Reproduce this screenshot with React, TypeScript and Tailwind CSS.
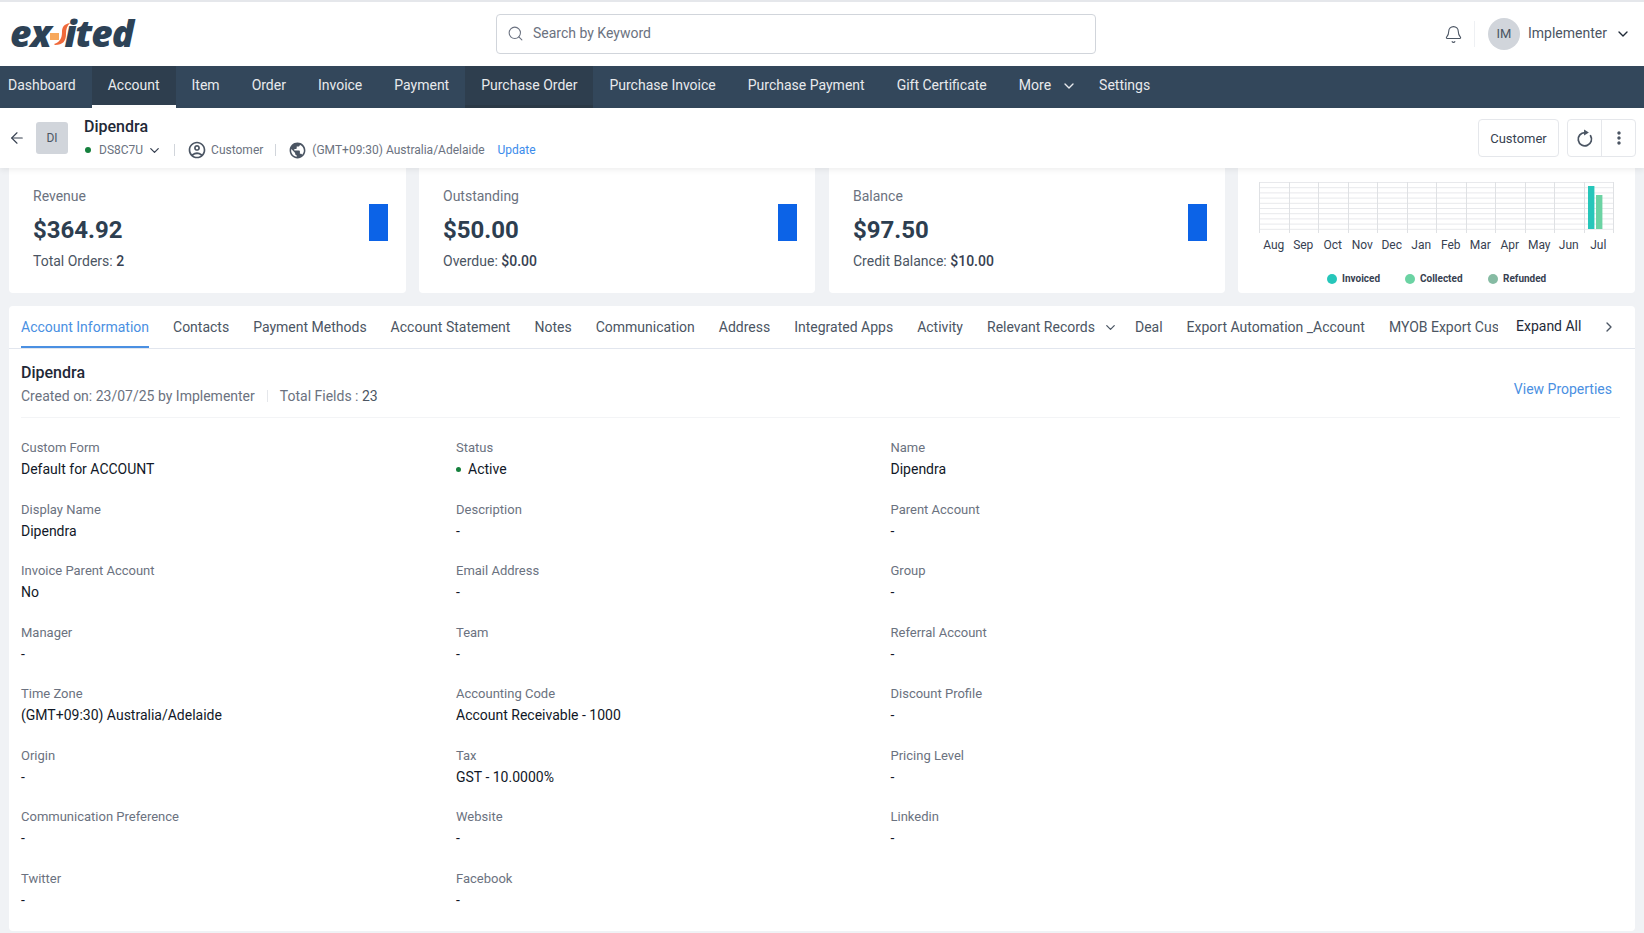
import React from "react";
import { ArrowLeft, Bell, ChevronDown, ChevronRight, Search } from "lucide-react";
import { MdMoreVert, MdOutlineAccountCircle, MdPublic } from "react-icons/md";

const nav: { label: string; cls: string; dark?: boolean; active?: boolean }[] = [
  { label: "Dashboard", cls: "pl-2 pr-4" },
  { label: "Account", cls: "px-4", dark: true, active: true },
  { label: "Item", cls: "px-4" },
  { label: "Order", cls: "px-4" },
  { label: "Invoice", cls: "px-4" },
  { label: "Payment", cls: "px-4" },
  { label: "Purchase Order", cls: "px-4", dark: true },
  { label: "Purchase Invoice", cls: "px-4" },
  { label: "Purchase Payment", cls: "px-4" },
  { label: "Gift Certificate", cls: "px-4" },
];

const tabs = [
  "Contacts",
  "Payment Methods",
  "Account Statement",
  "Notes",
  "Communication",
  "Address",
  "Integrated Apps",
  "Activity",
];

const cards = [
  { t: "Revenue", v: "$364.92", k: "Total Orders:", n: "2", c: "" },
  { t: "Outstanding", v: "$50.00", k: "Overdue:", n: "$0.00", c: "" },
  { t: "Balance", v: "$97.50", k: "Credit Balance:", n: "$10.00", c: "ml-[1px]" },
];

const fields: [string, string][] = [
  ["Custom Form", "Default for ACCOUNT"],
  ["Status", "Active"],
  ["Name", "Dipendra"],
  ["Display Name", "Dipendra"],
  ["Description", "-"],
  ["Parent Account", "-"],
  ["Invoice Parent Account", "No"],
  ["Email Address", "-"],
  ["Group", "-"],
  ["Manager", "-"],
  ["Team", "-"],
  ["Referral Account", "-"],
  ["Time Zone", "(GMT+09:30) Australia/Adelaide"],
  ["Accounting Code", "Account Receivable - 1000"],
  ["Discount Profile", "-"],
  ["Origin", "-"],
  ["Tax", "GST - 10.0000%"],
  ["Pricing Level", "-"],
  ["Communication Preference", "-"],
  ["Website", "-"],
  ["Linkedin", "-"],
  ["Twitter", "-"],
  ["Facebook", "-"],
];

const months = ["Aug", "Sep", "Oct", "Nov", "Dec", "Jan", "Feb", "Mar", "Apr", "May", "Jun", "Jul"];
const vLines = [0, 30, 59, 89, 118, 148, 177, 207, 236, 266, 295, 325, 354];
const hLines = [0, 5.2, 10.4, 15.6, 20.8, 26, 31.2, 36.4, 41.6, 46.8];

function Chart() {
  return (
    <div className="bg-white rounded-b-[4px] pl-[21px] pt-[14px]">
      <svg width="356" height="52" viewBox="0 0 356 52" className="block">
        {hLines.map((y) => (
          <line key={y} x1="0.5" x2="354.5" y1={y + 0.5} y2={y + 0.5} stroke="#e8e9ec" strokeWidth="1" />
        ))}
        {vLines.map((x) => (
          <line key={x} x1={x + 0.5} x2={x + 0.5} y1="0" y2="51" stroke="#dfe1e4" strokeWidth="1" />
        ))}
        <rect x="329" y="4" width="6.4" height="43" fill="#26c6ba" />
        <rect x="337" y="13" width="6.4" height="34" fill="#6bd3a3" />
      </svg>
      <div className="flex w-[354px] mt-[1px] text-[12px] leading-[20px] text-[#374151]">
        {months.map((m) => (
          <div key={m} className="flex-1 text-center">
            {m}
          </div>
        ))}
      </div>
      <div className="flex items-center mt-[14px] ml-[68px] text-[10px] leading-[20px] font-bold text-[#374151]">
        <span className="w-[10px] h-[10px] rounded-full bg-[#26c6ba] mr-[5px]" />
        <span className="w-[63px]">Invoiced</span>
        <span className="w-[10px] h-[10px] rounded-full bg-[#6bd3a3] mr-[5px]" />
        <span className="w-[68px]">Collected</span>
        <span className="w-[10px] h-[10px] rounded-full bg-[#86bba3] mr-[5px]" />
        <span>Refunded</span>
      </div>
    </div>
  );
}

function Logo() {
  return (
    <div className="flex items-center pl-[10px] pb-[3px] w-[496px] h-full text-[#2d4256] italic font-extrabold text-[37px] tracking-[-1px] leading-none font-['Open_Sans',sans-serif]">
      <span>ex</span>
      <svg width="24" height="30" viewBox="0 0 24 30" className="-ml-[1px] -mr-[9px] shrink-0">
        <rect x="1" y="15" width="9" height="7" fill="#f7a95c" />
        <path d="M21 5 C15 6 13 9 13 14 C13 20 11 24 5 26 L6 27 C14 27 17 23 17 16 C17 11 18 8 21 5 Z" fill="#f0693a" />
      </svg>
      <span>ited</span>
    </div>
  );
}

export default function App() {
  return (
    <div className="w-full h-[933px] overflow-hidden flex flex-col bg-[#f0f2f5] font-['Roboto',sans-serif] text-[14px] leading-[20px] text-[#374151]">
      <div className="h-[2px] shrink-0 bg-[#e5e7eb]" />
      <header className="h-[64px] shrink-0 bg-white flex items-center">
        <Logo />
        <div className="w-[600px] h-[40px] border border-[#d1d5db] rounded-[4px] flex items-center pl-[10px] pb-[2px]">
          <Search size={17} strokeWidth={1.5} className="text-[#6b7280]" />
          <span className="ml-[9px] text-[#6b7280]">Search by Keyword</span>
        </div>
        <Bell size={19} strokeWidth={1.4} className="text-[#4b5563] ml-[348px]" />
        <div className="w-px h-[26px] bg-[#eef0f3] ml-[11px]" />
        <div className="w-[32px] h-[32px] rounded-full bg-[#d1d5db] ml-[13px] flex items-center justify-center text-[#4b5563] text-[13px]">
          IM
        </div>
        <span className="ml-[8px] pb-[2px] text-[#4b5563]">Implementer</span>
        <ChevronDown size={16} strokeWidth={2} className="text-[#1f2937] ml-[8px]" />
      </header>

      <nav className="h-[42px] shrink-0 bg-[#33475b] flex items-stretch text-[#e8eaed]">
        {nav.map((n) => (
          <div
            key={n.label}
            className={`${n.cls} flex items-center ${n.dark ? "bg-[#2e3e4e] pb-[1px]" : "pb-[4px]"} ${
              n.active ? "border-b-[3px] border-white" : n.dark ? "border-b-[3px] border-[#2c3a47]" : ""
            }`}
          >
            {n.label}
          </div>
        ))}
        <div className="pl-4 flex items-center pb-[4px]">More</div>
        <div className="ml-[10px] flex items-center pb-[3px]">
          <ChevronDown size={16} />
        </div>
        <div className="pl-[22px] flex items-center pb-[4px]">Settings</div>
      </nav>

      <div className="h-[60px] shrink-0 bg-white flex items-center shadow-[0_2px_6px_rgba(0,0,0,0.07)] relative z-10">
        <ArrowLeft size={18} strokeWidth={1.5} className="text-[#374151] ml-[8px]" />
        <div className="w-[32px] h-[32px] rounded-[3px] bg-[#d1d5db] ml-[10px] flex items-center justify-center text-[12px] text-[#4b5563]">
          DI
        </div>
        <div className="ml-[16px] -mt-[1px]">
          <div className="text-[16px] leading-[24px] font-medium text-[#1f2937]">Dipendra</div>
          <div className="flex items-center text-[12px] leading-[16px] text-[#6b7280] mt-[1px]">
            <span className="w-[6px] h-[6px] rounded-full bg-[#15803d] ml-[1px]" />
            <span className="ml-[8px]">DS8C7U</span>
            <ChevronDown size={15} strokeWidth={2} className="ml-[4px] text-[#374151]" />
            <span className="w-px h-[12px] bg-[#d1d5db] ml-[12px]" />
            <MdOutlineAccountCircle size={20} className="ml-[12px] text-[#4b5563]" />
            <span className="ml-[4px]">Customer</span>
            <span className="w-px h-[12px] bg-[#d1d5db] ml-[12px]" />
            <MdPublic size={19} className="ml-[12px] text-[#4b5563]" />
            <span className="ml-[5px]">(GMT+09:30) Australia/Adelaide</span>
            <span className="ml-[13px] text-[#3b8beb]">Update</span>
          </div>
        </div>
        <div className="ml-auto flex items-center mr-[8px]">
          <div className="w-[81px] h-[38px] border border-[#e5e7eb] rounded-[4px] flex items-center justify-center text-[13px] text-[#374151] pt-[1px]">
            Customer
          </div>
          <div className="ml-[8px] w-[69px] h-[38px] border border-[#e5e7eb] rounded-[4px] flex items-stretch">
            <div className="flex-1 flex items-center justify-center border-r border-[#e5e7eb]">
              <svg width="21" height="21" viewBox="0 0 24 24" fill="none" className="text-[#4b5563]">
                <path d="M12.5 5.2a7.6 7.6 0 1 0 6.4 3.6" stroke="currentColor" strokeWidth="2" strokeLinecap="round" />
                <path d="M11.5 1.8 L17 5.2 L11.5 8.6 Z" fill="currentColor" />
              </svg>
            </div>
            <div className="flex-1 flex items-center justify-center">
              <MdMoreVert size={20} className="text-[#4b5563]" />
            </div>
          </div>
        </div>
      </div>

      <div className="grid grid-cols-[397px_396px_397px_397px] gap-x-[13px] px-[9px] h-[125px] shrink-0">
        {cards.map((c) => (
          <div key={c.t} className={`bg-white rounded-b-[4px] pl-[24px] pr-[18px] pt-[18px] flex justify-between ${c.c}`}>
            <div>
              <div className="text-[#6b7280]">{c.t}</div>
              <div className="text-[24px] leading-[32px] font-bold text-[#2d3e50] mt-[8px]">{c.v}</div>
              <div className="mt-[5px] text-[#4b5563]">
                {c.k} <span className="font-medium text-[#374151]">{c.n}</span>
              </div>
            </div>
            <div className="w-[19px] h-[37px] bg-[#0c63e7] mt-[18px]" />
          </div>
        ))}
        <Chart />
      </div>

      <main className="mt-[13px] mx-[9px] flex-1 min-h-0 mb-[2px] bg-white rounded-[4px]">
        <div className="h-[43px] border-b border-[#e2e6ee] flex items-stretch pl-[12px]">
          <div className="w-[1477px] shrink-0 overflow-hidden flex items-stretch gap-x-[24px] whitespace-nowrap text-[#4b5563]">
            <div className="shrink-0 flex items-center text-[#4a90e2] border-b-[2px] border-[#4a90e2] pt-px">
              Account Information
            </div>
            {tabs.map((t) => (
              <div key={t} className="shrink-0 flex items-center">
                {t}
              </div>
            ))}
            <div className="shrink-0 flex items-center">
              Relevant Records
              <ChevronDown size={15} strokeWidth={2} className="ml-[8px]" />
            </div>
            <div className="shrink-0 flex items-center -ml-[7px]">Deal</div>
            <div className="shrink-0 flex items-center">Export Automation _Account</div>
            <div className="shrink-0 flex items-center">MYOB Export Cus</div>
          </div>
          <div className="ml-[18px] flex items-center text-[#1f2937] -mt-[2px]">Expand All</div>
          <ChevronRight size={16} strokeWidth={2} className="self-center ml-[20px] text-[#4b5563]" />
        </div>

        <div className="mx-[12px] mr-[15px] h-[69px] border-b border-[#f3f4f6] pt-[12px] flex justify-between">
          <div>
            <div className="text-[16px] leading-[24px] font-medium text-[#1f2937]">Dipendra</div>
            <div className="flex items-center mt-[1px] text-[#6b7280]">
              <span>Created on: 23/07/25 by Implementer</span>
              <span className="w-px h-[12px] bg-[#e5e7eb] mx-[12px]" />
              <span>
                Total Fields : <span className="text-[#4b5563]">23</span>
              </span>
            </div>
          </div>
          <div className="mt-[18px] mr-[8px] text-[#4a90e2]">View Properties</div>
        </div>

        <div className="mx-[12px] mt-[20px] grid grid-cols-[435px_434.5px_1fr] auto-rows-[61.55px]">
          {fields.map(([k, v]) => (
            <div key={k}>
              <div className="text-[13px] leading-[20px] text-[#6b7280]">{k}</div>
              <div className="mt-[1px] text-[#111827] flex items-center">
                {k === "Status" && <span className="w-[5px] h-[5px] rounded-full bg-[#15803d] mr-[7px]" />}
                {v}
              </div>
            </div>
          ))}
        </div>
      </main>
    </div>
  );
}
